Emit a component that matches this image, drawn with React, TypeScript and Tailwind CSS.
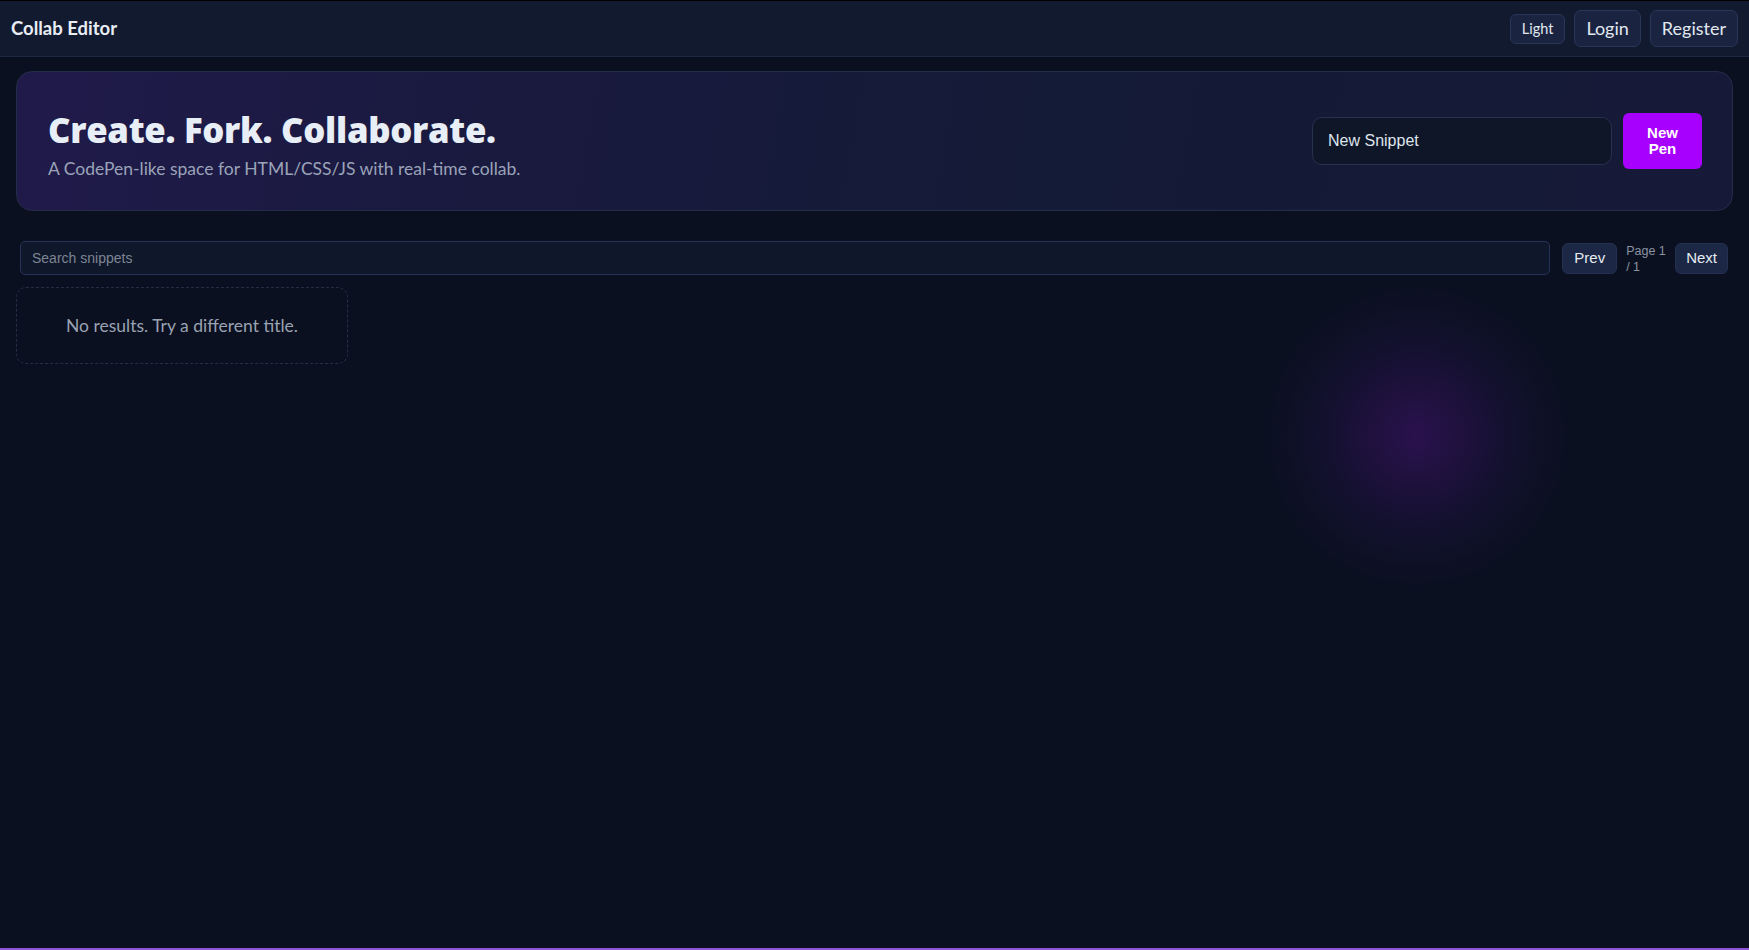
import React, { useState } from "react";

const ui = "font-['Lato','Open_Sans',sans-serif]";
const arial = "font-['Liberation_Sans',Arial,sans-serif]";

export default function App() {
  const [title, setTitle] = useState("New Snippet");
  const [query, setQuery] = useState("");

  return (
    <div className={`relative min-h-[950px] overflow-hidden bg-[#0a1020] text-[#e2e8f0] ${ui} border-t border-t-black border-b-2 border-b-[#8f55d6]`}>
      {/* glow */}
      <div className="pointer-events-none absolute left-[1262px] top-[280px] h-[310px] w-[310px] rounded-full bg-[radial-gradient(circle,rgba(95,20,150,0.38)_0%,rgba(60,20,110,0.2)_40%,rgba(10,16,32,0)_70%)]" />

      {/* Header */}
      <header className="flex h-[56px] items-center justify-between border-b border-[#1e2740] bg-[#121a2f] pl-[11px] pr-[11px]">
        <div className="pt-[1px] text-[18.5px] font-bold tracking-[0px] text-[#e8edf5]">Collab Editor</div>
        <div className="flex items-center gap-[9px]">
          <button className="h-[30px] rounded-[6px] border border-[#2a3658] bg-[#1a2441] px-[11px] text-[14.5px] text-[#e2e8f0]">
            Light
          </button>
          <button className="h-[37px] rounded-[7px] border border-[#2a3658] bg-[#1a2441] px-[11px] text-[18px] text-[#e2e8f0]">
            Login
          </button>
          <button className="h-[37px] rounded-[7px] border border-[#2a3658] bg-[#1a2441] px-[11px] text-[18px] text-[#e2e8f0]">
            Register
          </button>
        </div>
      </header>

      <main className="relative px-[16px] pt-[14px]">
        {/* Hero */}
        <section className="flex h-[140px] items-center justify-between rounded-[16px] border border-[#232c48] bg-[linear-gradient(100deg,#201a4a_0%,#1a1a40_25%,#141b36_60%,#161a38_100%)] pl-[31px] pr-[30px]">
          <div className="pt-[10px]">
            <h1 className="font-['Open_Sans',sans-serif] text-[34.7px] font-extrabold leading-[40px] tracking-[-0.3px] text-[#e8eef6]">
              Create. Fork. Collaborate.
            </h1>
            <p className="mt-[6px] text-[17.5px] text-[#9aa3b8]">
              A CodePen-like space for HTML/CSS/JS with real-time collab.
            </p>
          </div>
          <div className="flex items-center gap-[11px]">
            <input
              value={title}
              onChange={(e) => setTitle(e.target.value)}
              className={`h-[48px] w-[300px] rounded-[10px] border border-[#26304f] bg-[#0f1628] px-[15px] text-[16px] text-[#dfe5ee] outline-none ${arial}`}
            />
            <button className={`flex h-[56px] w-[79px] items-center justify-center rounded-[6px] bg-[#a800ff] text-[15px] font-bold leading-[16px] text-white ${arial}`}>
              New
              <br />
              Pen
            </button>
          </div>
        </section>

        {/* Search row */}
        <div className="mt-[30px] flex items-center gap-[9px] pl-[4px] pr-[5px]">
          <input
            value={query}
            onChange={(e) => setQuery(e.target.value)}
            placeholder="Search snippets"
            className={`mr-[3px] h-[34px] flex-1 rounded-[5px] border border-[#26325a] bg-[#0f172a] px-[11px] text-[14px] text-[#dfe5ee] outline-none placeholder:text-[#7d8593] ${arial}`}
          />
          <button className={`h-[31px] rounded-[6px] border border-[#23304f] bg-[#1b2744] px-[11px] text-[15px] text-[#e6ebf2] ${arial}`}>
            Prev
          </button>
          <div className={`w-[40px] pt-[2px] text-[12.5px] leading-[16px] text-[#8b93a3] ${arial}`}>
            Page 1
            <br />/ 1
          </div>
          <button className={`h-[31px] rounded-[6px] border border-[#23304f] bg-[#1b2744] px-[10px] text-[15px] text-[#e6ebf2] ${arial}`}>
            Next
          </button>
        </div>

        {/* Empty state */}
        <div className="mt-[12px] flex h-[77px] w-[332px] items-center justify-center rounded-[10px] border border-dashed border-[#262e45] pt-[2px] text-[17.5px] text-[#9aa2b2]">
          No results. Try a different title.
        </div>
      </main>
    </div>
  );
}
